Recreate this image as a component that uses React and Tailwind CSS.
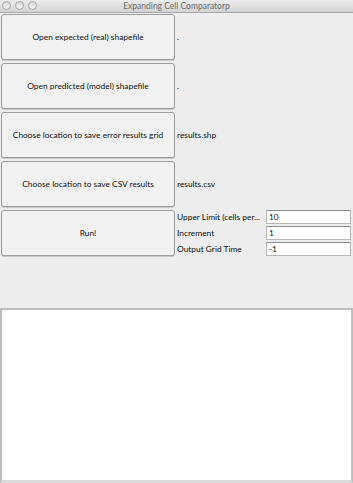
import React from "react";

const font = { fontFamily: '"Lato", "DejaVu Sans", sans-serif' };

function Btn({ children }) {
  return (
    <button
      className="h-[46px] w-[174px] shrink-0 rounded-[3px] border border-[#9d9d9d] bg-[#f1f1f1] text-[8.4px] text-[#111111] shadow-[0_1px_0_#c8c8c8]"
      style={font}
    >
      {children}
    </button>
  );
}

function Row({ label, children }) {
  return (
    <div className="flex h-[46px] items-center gap-[2px]">
      <Btn>{label}</Btn>
      <span className="text-[8.4px] text-[#111111]" style={font}>
        {children}
      </span>
    </div>
  );
}

function Field({ label, value }) {
  return (
    <div className="flex h-[13px] items-center">
      <span className="w-[89px] overflow-hidden whitespace-nowrap text-[8.4px] text-[#111111]" style={font}>
        {label}
      </span>
      <div
        className="h-[14px] w-[85px] border border-[#b5b5b5] border-t-[#8e8e8e] bg-white px-[2px] text-[8.4px] leading-[12px] text-[#111111]"
        style={font}
      >
        {value}
      </div>
    </div>
  );
}

export default function App() {
  return (
    <div className="flex h-[483px] w-[353px] flex-col bg-[#ededed]">
      <div className="relative flex h-[13px] shrink-0 items-center justify-center border-b border-[#a8a8a8] bg-gradient-to-b from-[#ececec] to-[#d3d3d3]">
        <div className="absolute left-[2px] top-[1px] flex gap-[4px]">
          <div className="h-[9px] w-[9px] rounded-full border border-[#a5a5a5] bg-gradient-to-b from-[#d8d8d8] to-[#f4f4f4]" />
          <div className="h-[9px] w-[9px] rounded-full border border-[#a5a5a5] bg-gradient-to-b from-[#d8d8d8] to-[#f4f4f4]" />
          <div className="h-[9px] w-[9px] rounded-full border border-[#a5a5a5] bg-gradient-to-b from-[#d8d8d8] to-[#f4f4f4]" />
        </div>
        <span className="text-[8.5px] text-[#6b6b6b]" style={font}>
          Expanding Cell Comparatorp
        </span>
      </div>
      <div className="flex flex-col gap-[3px] pl-[1px] pt-[1px]">
        <Row label="Open expected (real) shapefile">.</Row>
        <Row label="Open predicted (model) shapefile">.</Row>
        <Row label="Choose location to save error results grid">results.shp</Row>
        <Row label="Choose location to save CSV results">results.csv</Row>
        <div className="flex h-[46px] items-center gap-[2px]">
          <Btn>Run!</Btn>
          <div className="flex flex-col gap-[3px]">
            <Field label="Upper Limit (cells per..." value="10" />
            <Field label="Increment" value="1" />
            <Field label="Output Grid Time" value="-1" />
          </div>
        </div>
      </div>
      <div className="mt-auto h-[175px] border-b-[3px] border-l-[2px] border-r-[2px] border-t-[2px] border-[#bdbdbd] border-b-[#dadada] bg-white" />
    </div>
  );
}
